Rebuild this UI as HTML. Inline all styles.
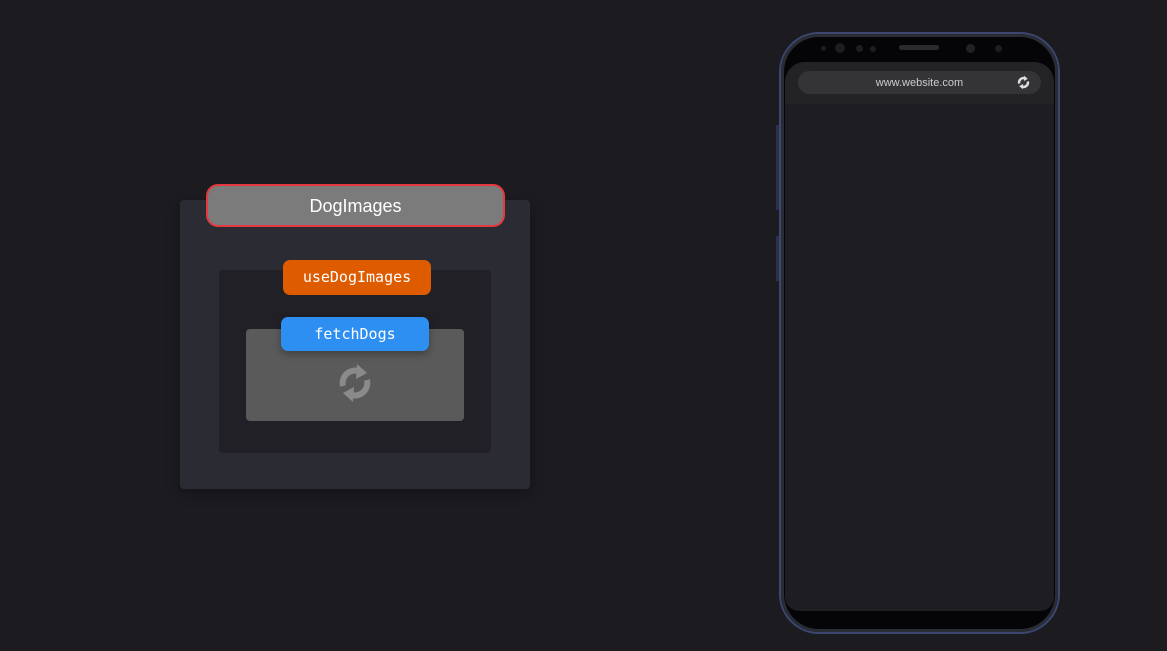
<!DOCTYPE html>
<html><head><style>
body{margin:0;width:1167px;height:651px;background:#1c1b20;position:relative;overflow:hidden;font-family:"Liberation Sans",sans-serif}
div{position:absolute;box-sizing:border-box}
.mono{font-family:"DejaVu Sans Mono","Liberation Mono",monospace;color:#fff;font-size:15px;text-align:center}
</style></head><body>
<div style="left:180px;top:200px;width:350px;height:289px;background:#2a2b33;border-radius:4px;box-shadow:0 4px 14px rgba(0,0,0,.3)"></div>
<div style="left:206px;top:184px;width:299px;height:43px;background:#7b7b7b;border:2px solid #e3393f;border-radius:12px;color:#fff;font-size:18px;text-align:center;line-height:40px">DogImages</div>
<div style="left:219px;top:270px;width:272px;height:183px;background:#202026;border-radius:4px"></div>
<div class="mono" style="left:283px;top:260px;width:148px;height:35px;background:#de5b00;border-radius:7px;line-height:35px">useDogImages</div>
<div style="left:246px;top:329px;width:218px;height:92px;background:#5a5a5a;border-radius:4px"></div>
<div class="mono" style="left:281px;top:317px;width:148px;height:34px;background:#2e8ff2;border-radius:7px;line-height:34px;box-shadow:0 3px 8px rgba(0,0,0,.3)">fetchDogs</div>
<svg style="position:absolute;left:335px;top:362px" width="40" height="42" viewBox="0 0 40 42">
<path d="M8 24 A12.5 12.5 0 0 1 26 10" fill="none" stroke="#8a8a8a" stroke-width="6"/>
<path d="M22 2 L32 11 L21 17 Z" fill="#8a8a8a"/>
<path d="M32 18 A12.5 12.5 0 0 1 14 32" fill="none" stroke="#8a8a8a" stroke-width="6"/>
<path d="M18 40 L8 31 L19 25 Z" fill="#8a8a8a"/>
</svg>
<!-- phone -->
<div style="left:779px;top:32px;width:281px;height:602px;background:#050507;border:2px solid #3c4670;border-radius:40px;box-shadow:inset 0 0 0 3px #2a2c34"></div>
<div style="left:785px;top:62px;width:269px;height:549px;background:#1e1d22;border-radius:20px 20px 14px 14px"></div>
<div style="left:785px;top:62px;width:269px;height:42px;background:#232326;border-radius:20px 20px 0 0"></div>
<div style="left:798px;top:71px;width:243px;height:23px;background:#343437;border-radius:12px;color:#ccc;font-size:11px;text-align:center;line-height:24px">www.website.com</div>
<svg style="position:absolute;left:1016px;top:75px" width="15" height="15" viewBox="0 0 40 42"><path d="M8 24 A12.5 12.5 0 0 1 26 10" fill="none" stroke="#ddd" stroke-width="7"/><path d="M22 2 L32 11 L21 17 Z" fill="#ddd"/><path d="M32 18 A12.5 12.5 0 0 1 14 32" fill="none" stroke="#ddd" stroke-width="7"/><path d="M18 40 L8 31 L19 25 Z" fill="#ddd"/></svg>
<div style="left:899px;top:45px;width:40px;height:5px;background:#2a2a2e;border-radius:3px"></div>
<div style="left:821px;top:46px;width:5px;height:5px;background:#1e1e22;border-radius:50%"></div>
<div style="left:835px;top:43px;width:10px;height:10px;background:#1e1e22;border-radius:50%"></div>
<div style="left:856px;top:45px;width:7px;height:7px;background:#1e1e22;border-radius:50%"></div>
<div style="left:870px;top:46px;width:6px;height:6px;background:#1e1e22;border-radius:50%"></div>
<div style="left:966px;top:44px;width:9px;height:9px;background:#222226;border-radius:50%"></div>
<div style="left:995px;top:45px;width:7px;height:7px;background:#1e1e22;border-radius:50%"></div>
<div style="left:776px;top:125px;width:3px;height:85px;background:#2a3050"></div>
<div style="left:776px;top:236px;width:3px;height:45px;background:#2a3050"></div>
</body></html>
